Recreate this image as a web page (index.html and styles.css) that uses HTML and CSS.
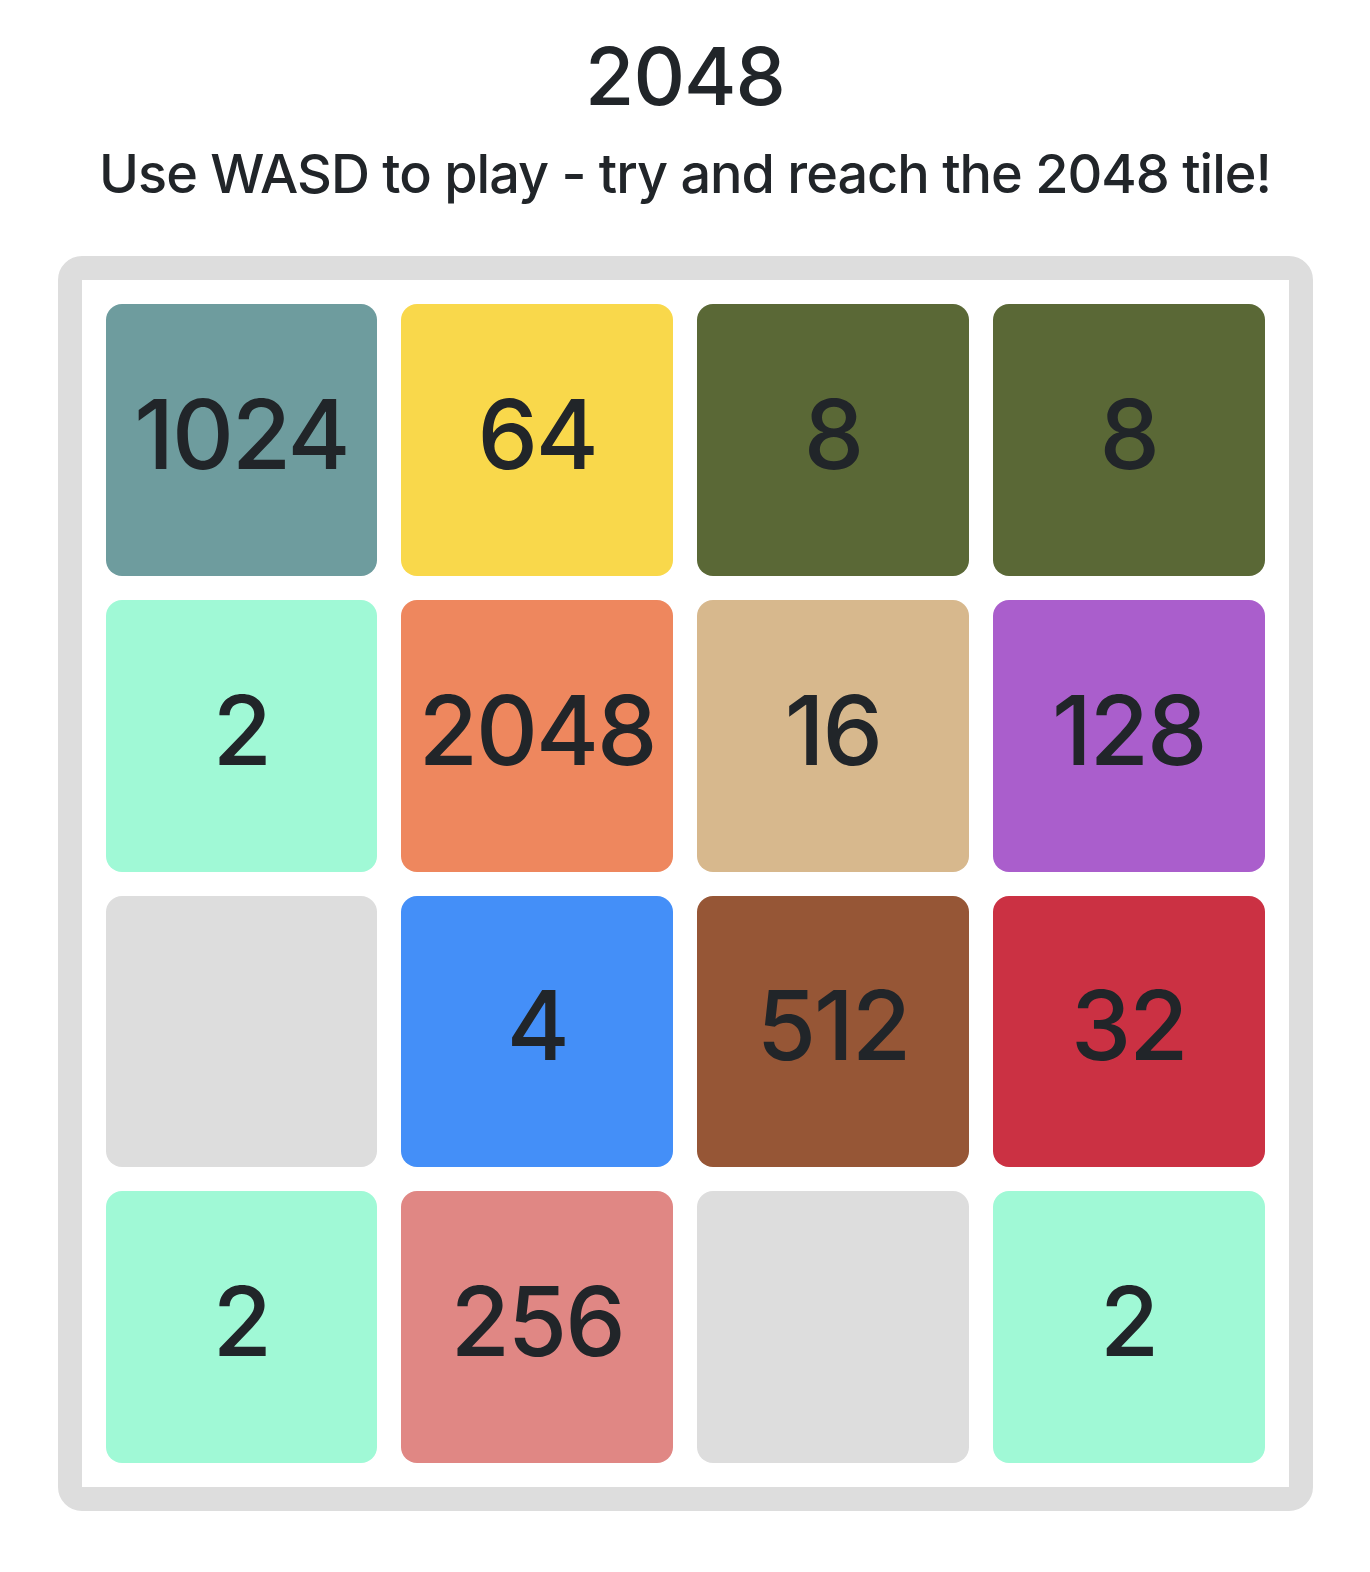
FILE: index.html
```html
<!DOCTYPE html>
<html lang="en">
<head>
<meta charset="utf-8">
<title>2048</title>
<link rel="stylesheet" href="styles.css">
</head>
<body>
<main class="page">
  <header class="header">
    <h1 class="title">2048</h1>
    <h3 class="subtitle">Use WASD to play - try and reach the 2048 tile!</h3>
  </header>
  <section class="board">
    <div class="tile t1024">1024</div>
    <div class="tile t64">64</div>
    <div class="tile t8">8</div>
    <div class="tile t8">8</div>
    <div class="tile t2">2</div>
    <div class="tile t2048">2048</div>
    <div class="tile t16">16</div>
    <div class="tile t128">128</div>
    <div class="tile empty"></div>
    <div class="tile t4">4</div>
    <div class="tile t512">512</div>
    <div class="tile t32">32</div>
    <div class="tile t2">2</div>
    <div class="tile t256">256</div>
    <div class="tile empty"></div>
    <div class="tile t2">2</div>
  </section>
</main>
</body>
</html>
```

FILE: styles.css
```css
* { box-sizing: border-box; }
html, body { margin: 0; padding: 0; background: #fff; }
body {
  font-family: Inter, "Noto Sans", "Liberation Sans", sans-serif;
  color: #212529;
}
.page {
  width: 1255px;
  margin: 0 auto;
  padding-top: 28px;
}
.header { text-align: center; }
.title {
  margin: 0 0 16px;
  font-size: 80px;
  font-weight: 500;
  line-height: 96px;
  letter-spacing: -1px;
}
.subtitle {
  margin: 0;
  font-size: 54px;
  font-weight: 500;
  line-height: 67px;
  letter-spacing: -1px;
}
.board {
  margin-top: 49px;
  border: 24px solid #dddddd;
  border-radius: 24px;
  padding: 24px;
  display: grid;
  grid-template-columns: repeat(4, 1fr);
  gap: 24px;
}
.tile {
  aspect-ratio: 1 / 1;
  border-radius: 16px;
  display: flex;
  align-items: center;
  justify-content: center;
  font-size: 96px;
  font-weight: 500;
  line-height: 1;
  letter-spacing: -2px;
  padding-bottom: 12px;
}
.empty { background: #dddddd; }
.t2 { background: #a0f9d6; }
.t4 { background: #448ff8; }
.t8 { background: #5a6836; }
.t16 { background: #d7b88d; }
.t32 { background: #cb3143; }
.t64 { background: #f9d84b; }
.t128 { background: #aa5ecc; }
.t256 { background: #e08784; }
.t512 { background: #965636; }
.t1024 { background: #6e9c9e; }
.t2048 { background: #ee875e; }
```
